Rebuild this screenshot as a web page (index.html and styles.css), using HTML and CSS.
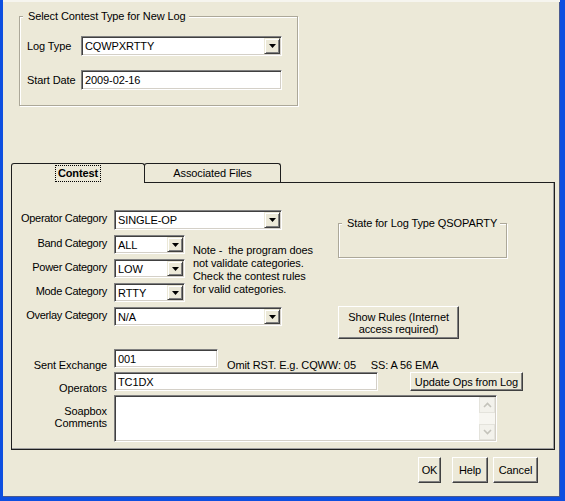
FILE: index.html
```html
<!DOCTYPE html>
<html>
<head>
<meta charset="utf-8">
<link rel="stylesheet" href="styles.css">
</head>
<body>
<div class="frame">
  <div class="client">
    <div class="group group-type">
      <span class="legend">Select Contest Type for New Log</span>
      <div class="type-grid">
        <span class="lbl">Log Type</span>
        <div class="combo"><span class="val">CQWPXRTTY</span><span class="drop"><svg width="7" height="4" viewBox="0 0 7 4"><path d="M0 0h7L3.5 4z" fill="#000"/></svg></span></div>
        <span class="lbl">Start Date</span>
        <div class="field"><span class="val">2009-02-16</span></div>
      </div>
    </div>

    <div class="tabs">
      <div class="tab active"><span class="focus">Contest</span></div>
      <div class="tab inactive">Associated Files</div>
    </div>

    <div class="panel">
      <div class="cat">
        <div class="cat-grid">
          <span class="lbl-r">Operator Category</span>
          <div class="combo combo-wide"><span class="val">SINGLE-OP</span><span class="drop"><svg width="7" height="4" viewBox="0 0 7 4"><path d="M0 0h7L3.5 4z" fill="#000"/></svg></span></div>

          <span class="lbl-r">Band Category</span>
          <div class="combo"><span class="val">ALL</span><span class="drop"><svg width="7" height="4" viewBox="0 0 7 4"><path d="M0 0h7L3.5 4z" fill="#000"/></svg></span></div>
          <div class="note">Note -&nbsp; the program does<br>not validate categories.<br>Check the contest rules<br>for valid categories.</div>

          <span class="lbl-r">Power Category</span>
          <div class="combo"><span class="val">LOW</span><span class="drop"><svg width="7" height="4" viewBox="0 0 7 4"><path d="M0 0h7L3.5 4z" fill="#000"/></svg></span></div>

          <span class="lbl-r">Mode Category</span>
          <div class="combo"><span class="val">RTTY</span><span class="drop"><svg width="7" height="4" viewBox="0 0 7 4"><path d="M0 0h7L3.5 4z" fill="#000"/></svg></span></div>

          <span class="lbl-r">Overlay Category</span>
          <div class="combo combo-wide"><span class="val">N/A</span><span class="drop"><svg width="7" height="4" viewBox="0 0 7 4"><path d="M0 0h7L3.5 4z" fill="#000"/></svg></span></div>
        </div>
        <div class="side">
          <div class="group state"><span class="legend">State for Log Type QSOPARTY</span></div>
          <button class="btn rules">Show Rules (Internet<br>access required)</button>
        </div>
      </div>

      <div class="info">
        <div class="row row-sent">
          <span class="lbl-b">Sent Exchange</span>
          <div class="field f-sent"><span class="val">001</span></div>
          <span class="hint">Omit RST. E.g. CQWW: 05     SS: A 56 EMA</span>
        </div>
        <div class="row row-ops">
          <span class="lbl-b">Operators</span>
          <div class="field f-ops"><span class="val">TC1DX</span></div>
          <button class="btn update">Update Ops from Log</button>
        </div>
        <div class="row row-soap">
          <span class="lbl-b lbl-soap">Soapbox<br>Comments</span>
          <div class="field f-soap">
            <span class="area"></span>
            <span class="vscroll">
              <span class="sbtn"><svg width="9" height="6" viewBox="0 0 9 6"><path d="M1 5L4.5 1.5L8 5" fill="none" stroke="#c4c3bb" stroke-width="1.6"/></svg></span>
              <span class="track"></span>
              <span class="sbtn"><svg width="9" height="6" viewBox="0 0 9 6"><path d="M1 1L4.5 4.5L8 1" fill="none" stroke="#c4c3bb" stroke-width="1.6"/></svg></span>
            </span>
          </div>
        </div>
      </div>
    </div>

    <div class="footer">
      <button class="btn b-ok">OK</button>
      <button class="btn b-help">Help</button>
      <button class="btn b-cancel">Cancel</button>
    </div>
  </div>
</div>
</body>
</html>
```

FILE: styles.css
```css
html, body {
  margin: 0;
  padding: 0;
}
body {
  font-family: "Liberation Sans", Arial, sans-serif;
  font-size: 11px;
  letter-spacing: -0.1px;
  color: #000;
  background: #0d4fe0;
}
.frame {
  width: 565px;
  height: 501px;
  box-sizing: border-box;
  background: #0d4fe0;
  padding: 0 5px 4px 3px;
}
.client {
  height: 100%;
  background: #ECE9D8;
  box-shadow: inset 0 2px #f6f5ef, inset -1px 0 #4a5a90, inset 0 -1px #4a5a90;
  display: flex;
  flex-direction: column;
}

/* group boxes */
.group {
  position: relative;
  box-sizing: border-box;
  border: 1px solid #aca899;
  box-shadow: inset 1px 1px #fff, 1px 1px #fff;
}
.legend {
  position: absolute;
  left: 3px;
  top: -7px;
  line-height: 13px;
  padding: 0 3px 0 5px;
  background: #ECE9D8;
  white-space: nowrap;
}
.group-type {
  margin: 16px 0 0 16px;
  width: 279px;
  height: 90px;
}
.type-grid {
  display: grid;
  grid-template-columns: 54px 201px;
  grid-template-rows: 20px 20px;
  row-gap: 14px;
  align-items: center;
  padding: 19px 0 0 7px;
}

/* inputs */
.combo, .field {
  box-sizing: border-box;
  border: 1px solid;
  border-color: #808080 #fff #fff #808080;
  box-shadow: inset 1px 1px #404040, inset -1px -1px #d4d0c8;
  background: #fff;
  display: flex;
  align-items: stretch;
  padding: 1px;
  height: 20px;
}
.val {
  flex: 1;
  display: flex;
  align-items: center;
  padding-left: 2px;
  white-space: nowrap;
  overflow: hidden;
}
.drop {
  width: 16px;
  box-sizing: border-box;
  background: #ECE9D8;
  border: 1px solid;
  border-color: #ECE9D8 #404040 #404040 #ECE9D8;
  box-shadow: inset 1px 1px #fff, inset -1px -1px #808080;
  display: flex;
  align-items: center;
  justify-content: center;
}
.drop svg { display: block; }

/* tabs */
.tabs {
  display: flex;
  align-items: flex-start;
  margin: 57px 0 0 8px;
  height: 19px;
  position: relative;
  z-index: 1;
}
.tab {
  box-sizing: border-box;
  border: 1px solid #1e1e1e;
  border-bottom: 0;
  border-radius: 3px 3px 0 0;
  background: #ECE9D8;
  display: flex;
  align-items: center;
  justify-content: center;
}
.tab.active {
  width: 134px;
  height: 20px;
  position: relative;
  z-index: 2;
}
.tab.inactive {
  width: 137px;
  height: 19px;
  margin-left: -1px;
}
.focus {
  font-weight: bold;
  font-size: 11px;
  border: 1px dotted #000;
  padding: 0 2px;
  line-height: 15px;
}

/* panel */
.panel {
  margin-left: 8px;
  width: 544px;
  height: 268px;
  box-sizing: border-box;
  border: 1px solid #1e1e1e;
  box-shadow: inset -1px -1px #a0a0a0;
  padding-top: 27px;
}
.cat {
  display: flex;
  align-items: flex-start;
}
.cat-grid {
  width: 326px;
  display: grid;
  grid-template-columns: 95px 71px 1fr;
  grid-template-rows: 20px 19px 19px 19px 19px;
  column-gap: 7px;
  row-gap: 5px;
}
.cat-grid .combo { height: 100%; }
.combo-wide {
  grid-column: 2 / 4;
  width: 168px;
}
.lbl-r {
  grid-column: 1;
  text-align: right;
  line-height: 13px;
  padding-top: 2px;
  white-space: nowrap;
  letter-spacing: -0.3px;
}
.note {
  grid-column: 3;
  grid-row: 2 / 5;
  padding: 9px 0 0 1px;
  line-height: 13px;
  white-space: nowrap;
}
.side {
  display: flex;
  flex-direction: column;
  align-items: flex-start;
  padding-top: 13px;
}
.state {
  width: 169px;
  height: 35px;
}

/* buttons */
.btn {
  font-family: inherit;
  font-size: 11px;
  letter-spacing: -0.1px;
  color: #000;
  background: #ECE9D8;
  box-sizing: border-box;
  border: 1px solid;
  border-color: #fff #404040 #404040 #fff;
  box-shadow: inset -1px -1px #808080;
  padding: 0;
  margin: 0;
  line-height: 12px;
}
.rules {
  margin-top: 48px;
  width: 121px;
  height: 33px;
}

/* lower rows */
.info {
  margin-top: 10px;
  display: flex;
  flex-direction: column;
  row-gap: 4px;
}
.row {
  display: flex;
  align-items: flex-start;
  column-gap: 7px;
  height: 19px;
}
.lbl-b {
  flex: none;
  width: 95px;
  text-align: right;
  line-height: 13px;
  padding-top: 10px;
  white-space: nowrap;
}
.row .field { height: 19px; flex: none; }
.f-sent { width: 104px; }
.hint {
  margin-left: 2px;
  padding-top: 10px;
  line-height: 13px;
  white-space: pre;
}
.f-ops { width: 264px; }
.update {
  margin-left: 25px;
  width: 113px;
  height: 19px;
}
.row-soap { height: 47px; }
.lbl-soap {
  line-height: 12px;
  padding-top: 10px;
}
.row .f-soap {
  width: 383px;
  height: 47px;
}
.area { flex: 1; }
.vscroll {
  width: 16px;
  display: flex;
  flex-direction: column;
  background: #f7f6f1;
}
.sbtn {
  height: 16px;
  box-sizing: border-box;
  border: 1px solid #e4e3dc;
  background: #f3f2ec;
  display: flex;
  align-items: center;
  justify-content: center;
}
.sbtn svg { display: block; }
.track { flex: 1; }

/* footer */
.footer {
  margin-top: 7px;
  display: flex;
  justify-content: flex-end;
  padding-right: 22px;
}
.footer .btn { height: 26px; }
.b-ok { width: 23px; margin-right: 11px; }
.b-help { width: 36px; margin-right: 5px; }
.b-cancel { width: 45px; }
```
